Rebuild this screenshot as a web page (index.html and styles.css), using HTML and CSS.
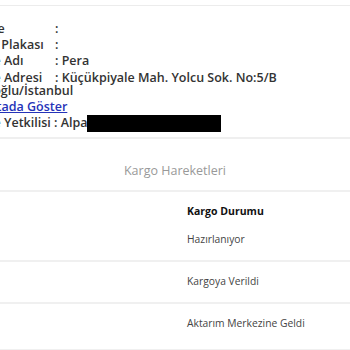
FILE: index.html
```html
<!DOCTYPE html>
<html lang="tr">
<head>
<meta charset="utf-8">
<link rel="stylesheet" href="styles.css">
</head>
<body>
<div class="page">
  <section class="info">
    <div class="row"><span class="label first">Şube</span><span class="colon">:</span></div>
    <div class="row"><span class="label">Araç Plakası</span><span class="colon">:</span></div>
    <div class="row"><span class="label">Şube Adı</span><span class="colon">: Pera</span></div>
    <div class="row addr"><span class="label">Şube Adresi</span><span class="colon">: Küçükpiyale Mah. Yolcu Sok. No:5/B</span><br>Beyoğlu/İstanbul</div>
    <div class="row"><a class="maplink" href="#">Haritada Göster</a></div>
    <div class="row"><span class="label short">Şube Yetkilisi</span><span class="colon">: Alpa</span><span class="redact"></span></div>
  </section>
  <h2 class="title">Kargo Hareketleri</h2>
  <div class="moves">
    <div class="move head"><span>Kargo Durumu</span></div>
    <div class="move first"><span>Hazırlanıyor</span></div>
    <div class="move"><span>Kargoya Verildi</span></div>
    <div class="move last"><span>Aktarım Merkezine Geldi</span></div>
  </div>
</div>
</body>
</html>
```
FILE: styles.css
```css
html, body {
  margin: 0;
  padding: 0;
  background: #fff;
  overflow: hidden;
}
body {
  width: 350px;
  height: 350px;
  font-family: "Open Sans", "Noto Sans", sans-serif;
}
.page {
  padding-top: 5px;
}
.info {
  border-top: 1px solid #ececec;
  border-bottom: 2px solid #efefef;
  margin-left: -29px;
  padding: 15px 0 6px 0;
  font-weight: 600;
  font-size: 12.5px;
  color: #333;
}
.row {
  display: flex;
  align-items: center;
  height: 16px;
  line-height: 16px;
  white-space: nowrap;
}
.row.addr {
  display: block;
  height: auto;
  line-height: 13px;
  padding: 2px 0;
}
.label {
  display: inline-block;
  width: 84px;
}
.label.first {
  width: 80px;
  padding-left: 4px;
}
.label.short {
  width: 83px;
}
.maplink {
  color: #2533b8;
  text-decoration: underline;
  line-height: 18px;
}
.redact {
  display: inline-block;
  width: 134px;
  height: 17px;
  background: #000;
}
.title {
  margin: 0;
  height: 51px;
  line-height: 64px;
  border-bottom: 2px solid #f0f0f0;
  text-align: center;
  font-weight: 400;
  font-size: 12.5px;
  color: #999;
}
.moves {
  font-size: 10.3px;
  color: #444;
}
.move {
  padding-left: 187px;
  height: 40px;
  line-height: 38px;
  border-bottom: 2px solid #f0f0f0;
}
.move.head {
  font-weight: 700;
  font-size: 10.5px;
  color: #111;
  height: 20px;
  line-height: 38px;
  border-bottom: none;
}
.move.first {
  height: 48px;
  line-height: 54px;
}
.move.last {
  height: 45px;
  line-height: 38px;
}
```
